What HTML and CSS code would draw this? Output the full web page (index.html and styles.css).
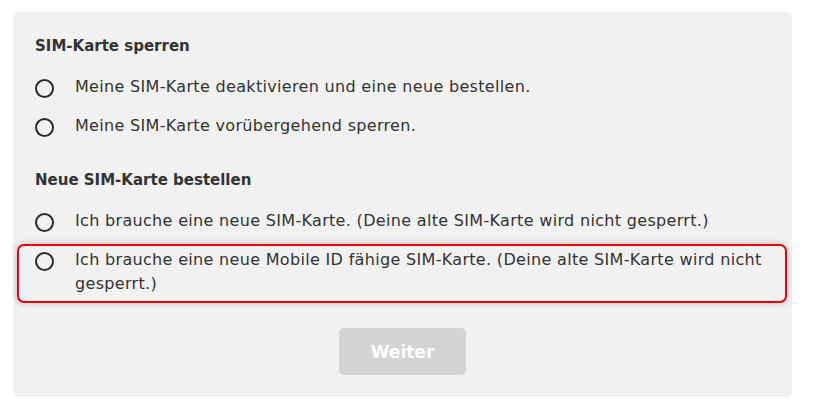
FILE: index.html
```html
<!DOCTYPE html>
<html lang="de">
<head>
<meta charset="utf-8">
<title>SIM-Karte</title>
<link rel="stylesheet" href="styles.css">
</head>
<body>
<div class="card">
  <h3 class="group-title">SIM-Karte sperren</h3>
  <div class="options">
    <label class="option"><span class="radio"></span><span class="label">Meine SIM-Karte deaktivieren und eine neue bestellen.</span></label>
    <label class="option"><span class="radio"></span><span class="label">Meine SIM-Karte vorübergehend sperren.</span></label>
  </div>
  <h3 class="group-title second">Neue SIM-Karte bestellen</h3>
  <div class="options">
    <label class="option"><span class="radio"></span><span class="label">Ich brauche eine neue SIM-Karte. (Deine alte SIM-Karte wird nicht gesperrt.)</span></label>
    <label class="option highlight"><span class="radio"></span><span class="label">Ich brauche eine neue Mobile ID fähige SIM-Karte. (Deine alte SIM-Karte wird nicht gesperrt.)</span></label>
  </div>
  <div class="actions">
    <button class="btn" type="button" disabled>Weiter</button>
  </div>
</div>
</body>
</html>
```

FILE: styles.css
```css
html, body {
  margin: 0;
  padding: 0;
  background: #ffffff;
}
body {
  padding: 12px 28px 13px 13px;
  font-family: "DejaVu Sans", "Liberation Sans", sans-serif;
  color: #333333;
}
.card {
  background: #f1f1f1;
  border-radius: 6px;
  padding: 22px 30px 22px 22px;
  height: 385px;
  box-sizing: border-box;
}
.group-title {
  margin: 0 0 17px 0;
  font-size: 15px;
  line-height: 24px;
  font-weight: 700;
}
.group-title.second {
  margin-top: 30px;
}
.options {
  display: flex;
  flex-direction: column;
  gap: 15px;
}
.option {
  display: flex;
  align-items: flex-start;
  gap: 21px;
  font-size: 16px;
  line-height: 24px;
  letter-spacing: 0.32px;
}
.radio {
  flex: none;
  width: 15px;
  height: 15px;
  border: 2px solid #2b2b2b;
  border-radius: 50%;
  margin-top: 4px;
}
.highlight {
  margin: -4px -25px 0 -18px;
  padding: 2px 5px 5px 16px;
  border: 2px solid #e8000b;
  border-radius: 7px;
  box-shadow: 0 0 6px rgba(0, 0, 0, 0.25);
}
.actions {
  display: flex;
  justify-content: center;
  margin-top: 25px;
  padding-left: 8px;
}
.btn {
  width: 127px;
  height: 47px;
  border: none;
  border-radius: 5px;
  background: #d4d4d4;
  color: #ffffff;
  font-family: inherit;
  font-size: 17px;
  font-weight: 700;
}
```
